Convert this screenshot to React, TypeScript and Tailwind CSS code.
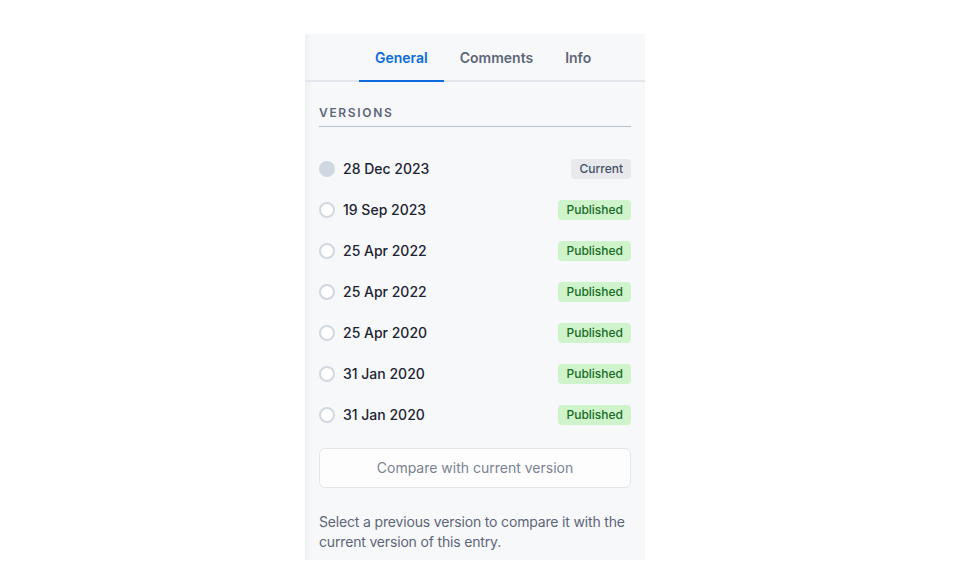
import React, { useState } from 'react';

const versions = [
  { date: '28 Dec 2023', status: 'Current' },
  { date: '19 Sep 2023', status: 'Published' },
  { date: '25 Apr 2022', status: 'Published' },
  { date: '25 Apr 2022', status: 'Published' },
  { date: '25 Apr 2020', status: 'Published' },
  { date: '31 Jan 2020', status: 'Published' },
  { date: '31 Jan 2020', status: 'Published' },
];

const tabs = ['General', 'Comments', 'Info'];

export default function App() {
  const [tab, setTab] = useState('General');

  return (
    <div className="min-h-screen bg-white font-['Inter',sans-serif]">
      <div className="ml-[305px] pt-[34px]">
        <div className="w-[340px] h-[526px] bg-[#f7f8fa] shadow-[inset_10px_0_10px_-10px_rgba(0,0,0,0.07)] flex flex-col">
          {/* tabs */}
          <div className="flex pl-[54px] h-[48px] border-b-2 border-[#e3e6ea]">
            {tabs.map((t) => (
              <button
                key={t}
                onClick={() => setTab(t)}
                className={`px-4 pt-[2px] -mb-[2px] text-sm font-semibold border-b-2 ${
                  tab === t ? 'text-[#0b6cdd] border-[#0b6cdd]' : 'text-[#5d6679] border-transparent'
                }`}
              >
                {t}
              </button>
            ))}
          </div>

          <div className="px-[14px] flex flex-col">
            <h2 className="pt-[23px] pb-[5px] text-xs leading-4 font-semibold tracking-[0.14em] text-[#5d6679] border-b border-[#b9c1cc]">
              VERSIONS
            </h2>

            <ul className="mt-[21px]">
              {versions.map((v, i) => (
                <li key={i} className="h-[41px] flex items-center">
                  <span
                    className={`w-4 h-4 rounded-full ${
                      i === 0 ? 'bg-[#cfd8e0]' : 'bg-white border-2 border-[#d1d8df]'
                    }`}
                  />
                  <span className="ml-2 text-sm font-medium text-[#1d2431]">{v.date}</span>
                  <span
                    className={`ml-auto h-5 px-2 rounded flex items-center text-xs font-medium ${
                      v.status === 'Current' ? 'bg-[#e7e9ed] text-[#465064]' : 'bg-[#cff3ca] text-[#176b26]'
                    }`}
                  >
                    {v.status}
                  </span>
                </li>
              ))}
            </ul>

            <button className="mt-[13px] h-10 w-full rounded-md border border-[#e3e6ea] bg-[#fdfdfe] text-sm text-[#7b8391]">
              Compare with current version
            </button>

            <p className="mt-6 text-sm leading-5 tracking-[-0.012em] text-[#5d6679]">
              Select a previous version to compare it with the current version of this entry.
            </p>
          </div>
        </div>
      </div>
    </div>
  );
}
